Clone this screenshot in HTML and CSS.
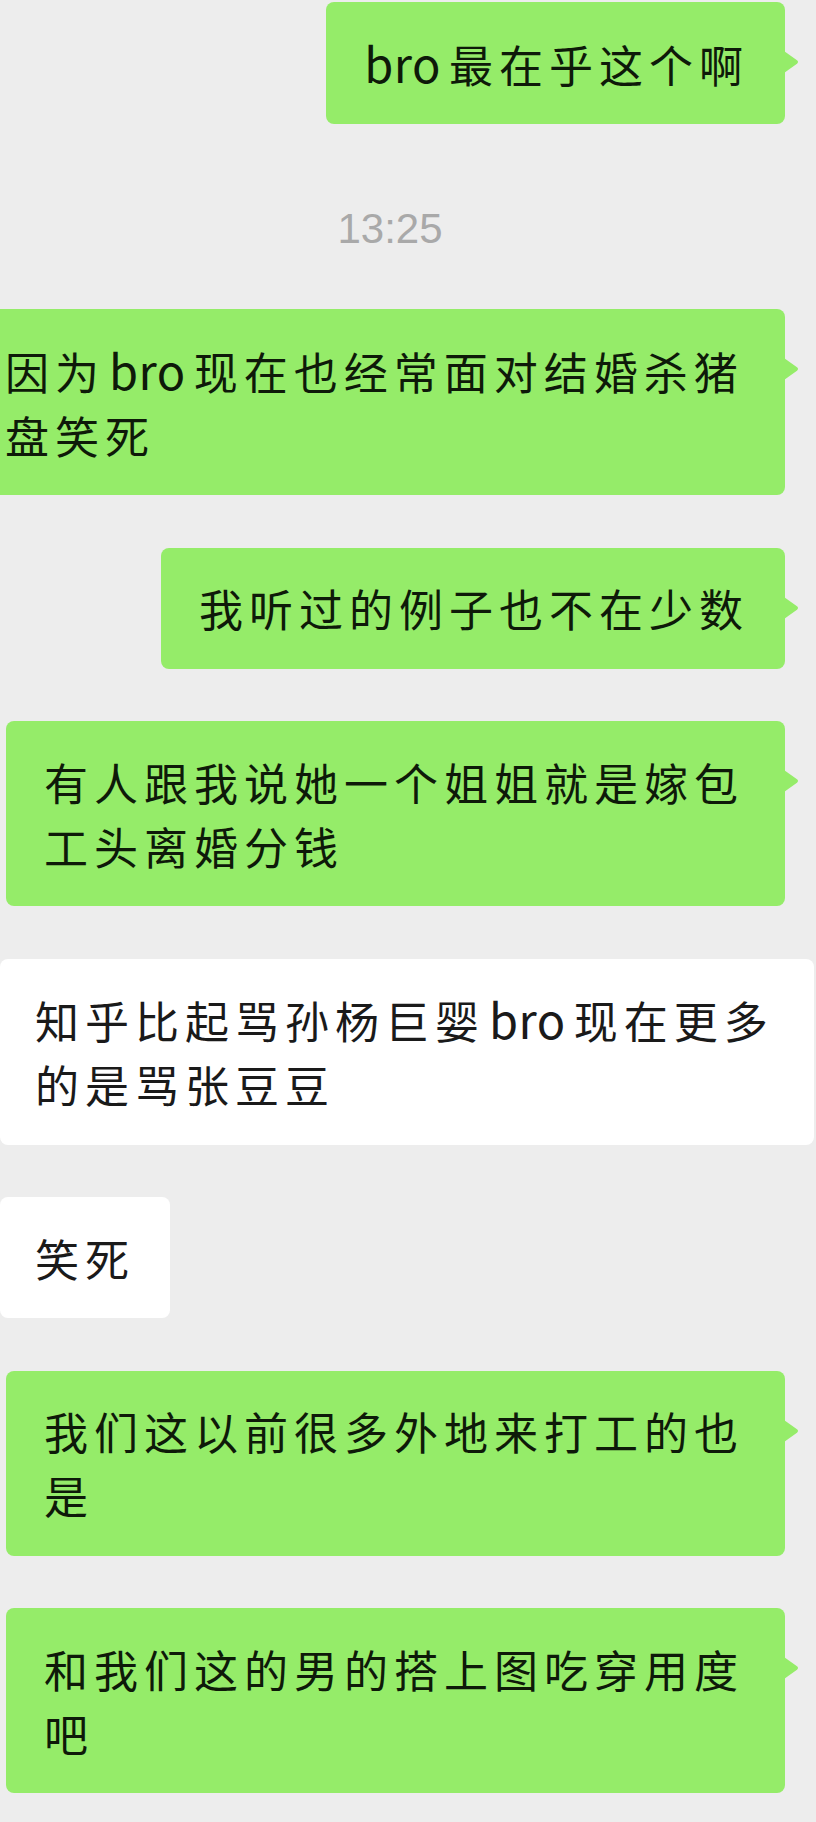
FILE: index.html
```html
<!DOCTYPE html>
<html lang="zh-CN">
<head>
<meta charset="utf-8">
<title>Chat</title>
<link rel="stylesheet" href="styles.css">
</head>
<body>
<div class="chat">
  <div class="row right">
    <div class="bubble green"><span class="lat first">bro</span>最在乎这个啊<svg class="tail" width="16" height="24" viewBox="0 0 16 24"><path d="M0 1 L13 10.3 Q15 12 13 13.7 L0 23 Z"/></svg></div>
  </div>

  <div class="time">13:25</div>

  <div class="row right">
    <div class="bubble green wide cut">因为<span class="lat">bro</span>现在也经常面对结婚杀猪<br>盘笑死<svg class="tail" width="16" height="24" viewBox="0 0 16 24"><path d="M0 1 L13 10.3 Q15 12 13 13.7 L0 23 Z"/></svg></div>
  </div>

  <div class="row right">
    <div class="bubble green">我听过的例子也不在少数<svg class="tail" width="16" height="24" viewBox="0 0 16 24"><path d="M0 1 L13 10.3 Q15 12 13 13.7 L0 23 Z"/></svg></div>
  </div>

  <div class="row right">
    <div class="bubble green wide">有人跟我说她一个姐姐就是嫁包<br>工头离婚分钱<svg class="tail" width="16" height="24" viewBox="0 0 16 24"><path d="M0 1 L13 10.3 Q15 12 13 13.7 L0 23 Z"/></svg></div>
  </div>

  <div class="row left">
    <div class="bubble white wide">知乎比起骂孙杨巨婴<span class="lat">bro</span>现在更多<br>的是骂张豆豆</div>
  </div>

  <div class="row left">
    <div class="bubble white">笑死</div>
  </div>

  <div class="row right">
    <div class="bubble green wide">我们这以前很多外地来打工的也<br>是<svg class="tail" width="16" height="24" viewBox="0 0 16 24"><path d="M0 1 L13 10.3 Q15 12 13 13.7 L0 23 Z"/></svg></div>
  </div>

  <div class="row right">
    <div class="bubble green wide">和我们这的男的搭上图吃穿用度<br>吧<svg class="tail" width="16" height="24" viewBox="0 0 16 24"><path d="M0 1 L13 10.3 Q15 12 13 13.7 L0 23 Z"/></svg></div>
  </div>
</div>
</body>
</html>
```

FILE: styles.css
```css
html, body {
  margin: 0;
  padding: 0;
  background: #ededed;
}

body {
  width: 816px;
  min-height: 1822px;
  font-family: "Noto Sans CJK SC", "Noto Sans", sans-serif;
}

.chat {
  display: flex;
  flex-direction: column;
  gap: 52.5px;
  padding-top: 2px;
}

.row {
  display: flex;
}

.row.right {
  justify-content: flex-end;
  padding-right: 31px;
  padding-left: 6px;
}

.row.left {
  justify-content: flex-start;
  padding-right: 2px;
}

.bubble {
  position: relative;
  padding: 28.5px 36px 28.5px 38px;
  font-size: 44px;
  line-height: 64px;
  letter-spacing: 6px;
  border-radius: 8px;
  white-space: nowrap;
}

.bubble.wide {
  flex: 1;
}

.green {
  background: #95ec69;
  color: #0e1a09;
}

.green.wide {
  padding-left: 38px;
}

.green.cut {
  padding-left: 5px;
  margin-left: -6px;
  border-radius: 0 8px 8px 0;
}

.white {
  background: #ffffff;
  color: #1a1a1a;
  padding-left: 35px;
  padding-right: 35px;
}

.lat {
  font-size: 47px;
  letter-spacing: 0.5px;
  margin: 0 8px 0 4px;
}

.lat.first {
  margin-left: 0;
}

.tail {
  position: absolute;
  left: calc(100% - 1px);
  top: 48px;
  fill: #95ec69;
}

.time {
  text-align: center;
  padding-right: 36px;
  padding-top: 24px;
  height: 56px;
  line-height: 56px;
  font-family: "Liberation Sans", Arial, sans-serif;
  font-size: 42px;
  color: #a9a9a9;
}
```
